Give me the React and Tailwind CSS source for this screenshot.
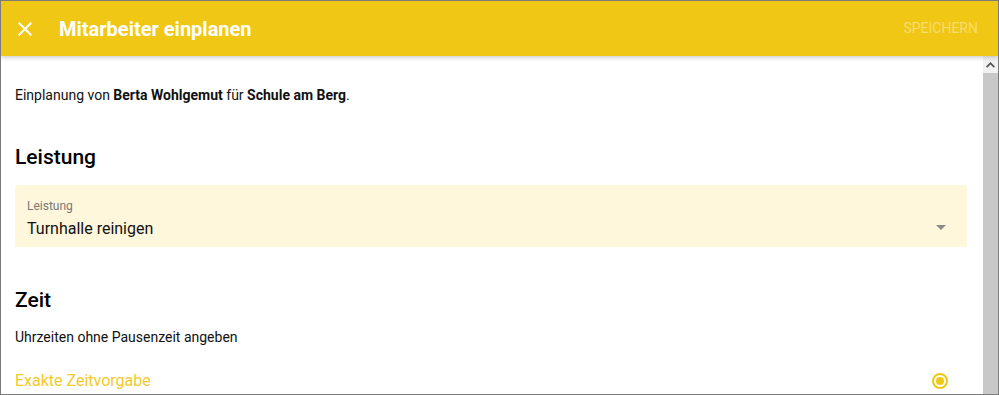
const CloseIcon = () => (
    <svg width="24" height="24" viewBox="0 0 24 24" fill="white">
        <path d="M19 6.41L17.59 5 12 10.59 6.41 5 5 6.41 10.59 12 5 17.59 6.41 19 12 13.41 17.59 19 19 17.59 13.41 12z" />
    </svg>
);

const App = () => {
    return (
        <div
            className="w-[999px] h-[395px] border border-[#7b7b7b] bg-white flex flex-col overflow-hidden"
            style={{ fontFamily: "Roboto, 'Noto Sans', sans-serif" }}
        >
            {/* Header */}
            <div className="relative z-10 h-[55px] shrink-0 bg-[#f1c716] flex items-center pl-[12px] pr-[20px] shadow-[0_2px_4px_rgba(0,0,0,0.18)]">
                <button className="w-[24px] h-[24px] flex items-center justify-center mt-[1px]">
                    <CloseIcon />
                </button>
                <h1 className="ml-[22px] text-white text-[20px] font-bold">
                    Mitarbeiter einplanen
                </h1>
                <button className="ml-auto text-[14px] text-[#f7dc6e] uppercase">
                    Speichern
                </button>
            </div>

            {/* Body */}
            <div className="flex flex-1 min-h-0">
                <div className="flex-1 pl-[14px] pr-[16px] overflow-hidden">
                    <p className="mt-[29px] text-[14px] leading-[20px] text-[#111]">
                        Einplanung von <b className="font-bold">Berta Wohlgemut</b> für{" "}
                        <b className="font-bold">Schule am Berg</b>.
                    </p>

                    <h2 className="mt-[38px] text-[21px] leading-[28px] font-medium text-black">
                        Leistung
                    </h2>

                    <div className="mt-[14px] h-[62px] bg-[#fff7dc] rounded-t-[3px] px-[12px] pt-[14px] relative">
                        <div className="text-[12px] leading-[14px] text-[#777]">Leistung</div>
                        <div className="mt-[6px] text-[16px] leading-[20px] text-[#111]">
                            Turnhalle reinigen
                        </div>
                        <div className="absolute right-[21px] top-[40px] w-0 h-0 border-l-[5px] border-r-[5px] border-t-[5px] border-l-transparent border-r-transparent border-t-[#8a8a8a]" />
                    </div>

                    <h2 className="mt-[39px] text-[21px] leading-[28px] font-medium text-black">
                        Zeit
                    </h2>

                    <p className="mt-[13px] text-[14px] leading-[20px] text-[#111]">
                        Uhrzeiten ohne Pausenzeit angeben
                    </p>

                    <div className="mt-[23px] flex items-center justify-between pr-[19px]">
                        <span className="text-[16px] leading-[22px] text-[#f3c92e]">
                            Exakte Zeitvorgabe
                        </span>
                        <span className="w-[16px] h-[16px] rounded-full border-2 border-[#f1c716] flex items-center justify-center">
                            <span className="w-[8px] h-[8px] rounded-full bg-[#f1c716]" />
                        </span>
                    </div>
                </div>

                {/* Scrollbar */}
                <div className="w-[15px] shrink-0 flex flex-col bg-[#c8c8c8]">
                    <div className="h-[17px] bg-[#f1f1f1] flex items-center justify-center">
                        <svg width="9" height="6" viewBox="0 0 9 6" fill="#555">
                            <path d="M4.5 0L9 4.5 7.8 5.7 4.5 2.4 1.2 5.7 0 4.5z" />
                        </svg>
                    </div>
                </div>
            </div>
        </div>
    );
};

export default App;
